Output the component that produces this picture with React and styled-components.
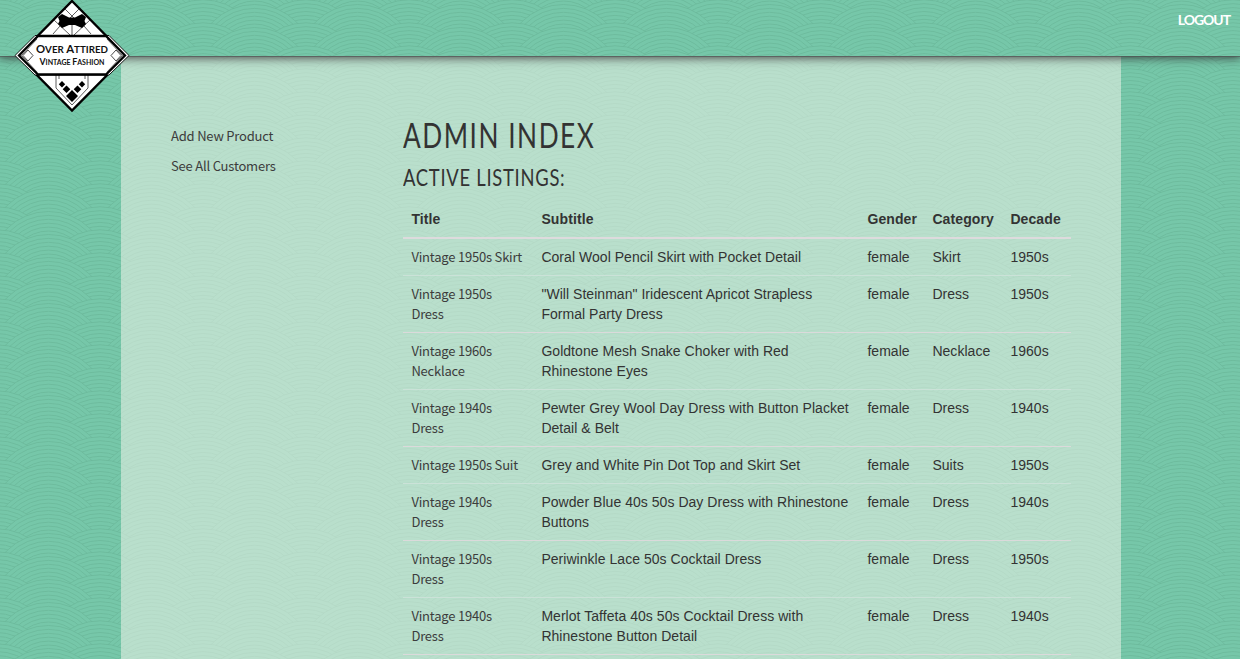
import React from 'react';
import styled, { createGlobalStyle } from 'styled-components';

const TILE_W = 103;
const TILE_H = 23;

const scale = (cx, crest) => {
  let rings = '';
  for (let k = 0; k < 6; k += 1) {
    const r = 59 - k * 3.9;
    rings += `<circle cx="${cx}" cy="${crest + 59}" r="${r}"/>`;
  }
  return rings;
};

const waveTile = () => {
  let body = '';
  for (let row = -5; row <= 1; row += 1) {
    const y = row * TILE_H + 4.5;
    [-54.5, 48.5, 151.5].forEach((x) => { body += scale(x, y); });
    [-3, 100, 203].forEach((x) => { body += scale(x, y + 18.3); });
  }
  const svg = `<svg xmlns="http://www.w3.org/2000/svg" width="${TILE_W}" height="${TILE_H}"><rect width="103" height="23" fill="#76c7a9"/><g fill="#76c7a9" stroke="#68b698" stroke-width="0.7">${body}</g></svg>`;
  return `url("data:image/svg+xml,${encodeURIComponent(svg)}")`;
};

const waves = waveTile();

const GlobalStyle = createGlobalStyle`
  * { box-sizing: border-box; }
  body {
    margin: 0;
    height: 100vh;
    overflow: hidden;
    color: #333;
    font: 14px/20px "Liberation Sans", Arial, sans-serif;
    background: #76c7a9 ${waves} 0 0;
  }
`;

const Header = styled.header`
  position: relative;
  z-index: 1;
  display: flex;
  justify-content: space-between;
  align-items: flex-start;
  height: 56px;
  padding: 0 10px 0 14px;
  background: ${waves} 0 0;
  box-shadow: 0 1px 0 rgba(80, 80, 80, 0.6), 0 0 10px 1px rgba(40, 30, 35, 0.9);
`;

const Logo = styled.svg`
  flex: none;
  display: block;
  width: 116px;
  height: 113px;
`;

const Logout = styled.a`
  margin-top: 10px;
  color: #fff;
  font: 700 14px/20px Lato, sans-serif;
  letter-spacing: -1.05px;
`;

const Panel = styled.main`
  display: flex;
  width: 1000px;
  height: calc(100vh - 56px);
  margin-left: 121px;
  padding: 60px 50px 0;
  overflow: hidden;
  background: rgba(252, 247, 239, 0.5);
`;

const SideNav = styled.nav`
  display: flex;
  flex-direction: column;
  gap: 10px;
  width: 232px;
  padding-top: 10px;
`;

const Link = styled.a`
  color: #3c3c3c;
  font-family: "Noto Sans CJK SC", sans-serif;
  font-size: 13px;
  line-height: 20px;
  letter-spacing: -0.2px;
`;

const Content = styled.section`
  width: 668px;
`;

const Title = styled.h1`
  margin: -1px 0 0;
  font: 400 34.5px/40px Lato, sans-serif;
  letter-spacing: 2px;
  white-space: nowrap;
  transform: scaleX(0.76);
  transform-origin: 0 50%;
`;

const Subtitle = styled.h2`
  margin: 2px 0 4px;
  font: 400 23px/40px Lato, sans-serif;
  letter-spacing: 0.9px;
  white-space: nowrap;
  transform: scaleX(0.8);
  transform-origin: 0 50%;
`;

const Table = styled.table`
  width: 668px;
  table-layout: fixed;
  border-collapse: separate;
  border-spacing: 0;
`;

const Col = styled.col`
  width: ${(p) => p.$w}px;
`;

const Th = styled.th`
  padding: 8px 0 8px 8.4px;
  border-bottom: 2px solid #dddbdd;
  text-align: left;
  letter-spacing: 0.1px;
`;

const Td = styled.td`
  height: 37px;
  padding: 8px 8px 8px 8.4px;
  border-bottom: 1px solid ${(p) => (p.$faint ? '#cbe2d8' : '#dbdadb')};
  vertical-align: top;
  letter-spacing: 0.04px;
`;

const rows = [
  ['Vintage 1950s Skirt', 'Coral Wool Pencil Skirt with Pocket Detail', 'female', 'Skirt', '1950s'],
  ['Vintage 1950s Dress', '"Will Steinman" Iridescent Apricot Strapless Formal Party Dress', 'female', 'Dress', '1950s'],
  ['Vintage 1960s Necklace', 'Goldtone Mesh Snake Choker with Red Rhinestone Eyes', 'female', 'Necklace', '1960s'],
  ['Vintage 1940s Dress', 'Pewter Grey Wool Day Dress with Button Placket Detail & Belt', 'female', 'Dress', '1940s'],
  ['Vintage 1950s Suit', 'Grey and White Pin Dot Top and Skirt Set', 'female', 'Suits', '1950s'],
  ['Vintage 1940s Dress', 'Powder Blue 40s 50s Day Dress with Rhinestone Buttons', 'female', 'Dress', '1940s'],
  ['Vintage 1950s Dress', 'Periwinkle Lace 50s Cocktail Dress', 'female', 'Dress', '1950s'],
  ['Vintage 1940s Dress', 'Merlot Taffeta 40s 50s Cocktail Dress with Rhinestone Button Detail', 'female', 'Dress', '1940s'],
];

function BrandLogo() {
  return (
    <Logo viewBox="14 0 116 113" role="img" aria-label="Over Attired Vintage Fashion">
      <path d="M72 1 L126 56 L72 110.500 L18 56Z" fill="#fff" stroke="#000" strokeWidth="2.4" />
      <g fill="none" stroke="#333" strokeWidth="0.8">
        <path d="M65 9 L80 24 M79 9 L64 24 M54 20 L70 35 M90 20 L74 35 M72 25 V36 M60 26 L53 34 M84 26 L91 34" />
        <path d="M56 75 V88 L72 105 L88 88 V75 M59 75 V79 M85 75 V79" />
      </g>
      <path d="M58 17 L62 14 L69 17.500 H75 L82 14 L86 17 L84.500 21 L86 24 L82 28 L75 25 H69 L62 28 L58 24 L59.500 21Z" />
      <path d="M35 35.500 H109 L129 55.500 L109 75 H35 L15 55.500Z" fill="#fff" stroke="#000" strokeWidth="0.9" />
      <path d="M38 36 H106 L125 55.500 L106 74.500 H38 L19 55.500Z" fill="#fff" stroke="#000" strokeWidth="2.3" />
      <path d="M37 39 L21.500 55.500 L37 72 M107 39 L122.500 55.500 L107 72" fill="none" stroke="#333" strokeWidth="0.8" />
      <path d="M28 50 L33 55.500 L28 61 L23 55.500Z M116 50 L121 55.500 L116 61 L111 55.500Z" fill="#fff" stroke="#333" strokeWidth="0.9" />
      <path d="M62 81 l3.200 3.200 -3.200 3.200 -3.200 -3.200Z M66.500 85.500 l3.800 3.800 -3.800 3.800 -3.800 -3.800Z M72 90 l6 6 -6 6 -6 -6Z M77.500 85.500 l3.800 3.800 -3.800 3.800 -3.800 -3.800Z M82 81 l3.200 3.200 -3.200 3.200 -3.200 -3.200Z" />
      <g fontFamily="Lato, sans-serif" fontWeight="700" fill="#111">
        <text x="36" y="53" fontSize="9.500" textLength="72" lengthAdjust="spacingAndGlyphs">
          <tspan fontSize="11">O</tspan>VER <tspan fontSize="11">A</tspan>TTIRED
        </text>
        <text x="39.500" y="64.500" fontSize="6.800" textLength="65" lengthAdjust="spacingAndGlyphs">
          <tspan fontSize="8.500">V</tspan>INTAGE <tspan fontSize="8.500">F</tspan>ASHION
        </text>
      </g>
    </Logo>
  );
}

export default function App() {
  return (
    <>
      <GlobalStyle />
      <Header>
        <BrandLogo />
        <Logout>LOGOUT</Logout>
      </Header>
      <Panel>
        <SideNav>
          <Link>Add New Product</Link>
          <Link>See All Customers</Link>
        </SideNav>
        <Content>
          <Title>ADMIN INDEX</Title>
          <Subtitle>ACTIVE LISTINGS:</Subtitle>
          <Table>
            <colgroup>
              {[130, 326, 65, 78, 69].map((w, i) => <Col key={i} $w={w} />)}
            </colgroup>
            <thead>
              <tr>
                {['Title', 'Subtitle', 'Gender', 'Category', 'Decade'].map((h) => <Th key={h}>{h}</Th>)}
              </tr>
            </thead>
            <tbody>
              {rows.map(([title, ...cells], r) => (
                <tr key={r}>
                  <Td $faint={r % 2 === 0}><Link>{title}</Link></Td>
                  {cells.map((c, i) => <Td key={i} $faint={r % 2 === 0}>{c}</Td>)}
                </tr>
              ))}
            </tbody>
          </Table>
        </Content>
      </Panel>
    </>
  );
}
